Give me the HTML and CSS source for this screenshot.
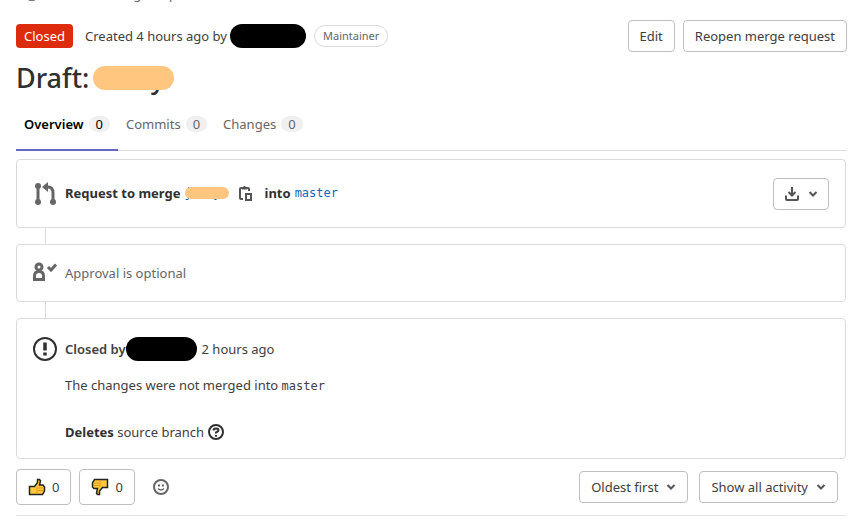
FILE: index.html
```
<!DOCTYPE html>
<html lang="en">
<head>
<meta charset="utf-8">
<title>Merge request</title>
<link rel="stylesheet" href="styles.css">
</head>
<body>
<nav class="crumbs" aria-label="Breadcrumb"><span>/_ /</span><span>Merge requests</span></nav>
<main>
  <header class="top">
    <span class="state">Closed</span>
    <span class="meta">Created 4 hours ago by</span>
    <span class="redact author"></span>
    <span class="role">Maintainer</span>
    <div class="actions">
      <button class="btn" type="button">Edit</button>
      <button class="btn" type="button">Reopen merge request</button>
    </div>
  </header>
  <h1 class="title">Draft: <span class="cover cover-title"><span>y.</span></span></h1>
  <nav class="tabs" aria-label="Sections">
    <a class="tab active" href="#overview">Overview <span class="count">0</span></a>
    <a class="tab" href="#commits">Commits <span class="count">0</span></a>
    <a class="tab" href="#changes">Changes <span class="count">0</span></a>
  </nav>

  <section class="card merge">
    <svg class="icon" viewBox="0 0 24 24" width="24" height="24" fill="none" stroke="#666" stroke-width="3"><circle cx="5" cy="4" r="3" fill="#666" stroke="none"/><circle cx="5" cy="20" r="3" fill="#666" stroke="none"/><circle cx="20" cy="20" r="3" fill="#666" stroke="none"/><path d="M5 4v16M20 20V11q0-6-5-6h-1"/><path d="M15 0v10L9 5z" fill="#666" stroke="none"/></svg>
    <div class="request">
      <b>Request to merge</b>
      <a class="cover cover-branch mono" href="#source"><span>j</span><span>y</span></a>
      <button class="copy" type="button" aria-label="Copy branch name"><svg viewBox="0 0 16 16" width="16" height="16" fill="none" stroke="#555" stroke-width="2"><path d="M6 14H4q-1 0-1-1V4q0-1 1-1h7q1 0 1 1v2"/><path d="M5 4.500V3l2-2h1l2 2v1.500z" fill="#555" stroke="none"/><path d="M9 9h5v6H9z"/></svg></button>
      <b>into</b>
      <a class="mono" href="#master">master</a>
    </div>
    <button class="btn download" type="button" aria-label="Download"><svg viewBox="0 0 16 16" width="16" height="16" fill="none" stroke="#555" stroke-width="2"><path d="M2 9.500V13q0 1 1 1h10q1 0 1-1V9.500M8 1v8M4.500 6L8 9.500 11.500 6"/></svg><svg class="chev" viewBox="0 0 10 8" width="10" height="8"><path d="M1.500 2L5 5.500 8.500 2"/></svg></button>
  </section>
  <section class="card approval">
    <svg class="icon" viewBox="0 0 24 24" width="24" height="24" fill="none" stroke="#666" stroke-width="3"><circle cx="6" cy="6" r="3"/><path d="M1.500 18.500v-3.500q0-4.500 4.500-4.500t4.500 4.500v3.500z"/><path d="M15 6l3 3 5-5.500"/></svg>
    <span class="muted">Approval is optional</span>
  </section>
  <section class="card closed">
    <svg class="icon" viewBox="0 0 24 24" width="24" height="24" fill="none" stroke="#303030"><circle cx="12" cy="12" r="11" stroke-width="2"/><path d="M12 5.500v8M12 15.500v3" stroke-width="3.500"/></svg>
    <div>
      <p class="line"><span class="semi">Closed by</span><span class="redact closer"></span><span>2 hours ago</span></p>
      <p class="note">The changes were not merged into <code class="mono">master</code></p>
      <p class="line"><span><b>Deletes</b> source branch</span><svg class="help" viewBox="0 0 16 16" width="16" height="16" fill="none" stroke="#303030" stroke-width="2"><circle cx="8" cy="8" r="7"/><path d="M5.500 6.500q0-2 2.500-2t2.500 1.800q0 1.200-2.500 2.200v1M8 11v1.800"/></svg></p>
    </div>
  </section>

  <footer class="bottom">
    <button class="btn award" type="button" aria-label="Thumbs up"><svg viewBox="0 0 18 18" width="18" height="18"><path class="thumb" d="M1.500 8.500h5l3-4v-3h2l1 1.500-1 4h3.500l1.500 2v4l-2 3.500h-13z"/><path class="fold" d="M9 9v7M10 10h5M10 12.500h5"/></svg><span>0</span></button>
    <button class="btn award" type="button" aria-label="Thumbs down"><svg viewBox="0 0 18 18" width="18" height="18"><path class="thumb" d="M16.500 1.500v8h-5l-3 3.500v3.500h-2l-1-1.500 1-4.500H3L1.500 9V5l2-3.500z"/><path class="fold" d="M9 2v7M3 5h5M3 7.500h5"/></svg><span>0</span></button>
    <button class="react" type="button" aria-label="Add reaction"><svg viewBox="0 0 16 16" width="16" height="16" fill="none" stroke="#666"><circle cx="8" cy="8" r="7" stroke-width="2"/><path d="M5 9.500q3 3 6 0" stroke-width="1.500"/><path d="M5 5.500h2v2H5zM9 5.500h2v2H9z" fill="#666" stroke="none"/></svg></button>
    <div class="filters">
      <button class="btn" type="button">Oldest first<svg class="chev" viewBox="0 0 10 8" width="10" height="8"><path d="M1.500 2L5 5.500 8.500 2"/></svg></button>
      <button class="btn" type="button">Show all activity<svg class="chev" viewBox="0 0 10 8" width="10" height="8"><path d="M1.500 2L5 5.500 8.500 2"/></svg></button>
    </div>
  </footer>
</main>
</body>
</html>
```
FILE: styles.css
```
* { box-sizing: border-box; }
body { margin: 0; background: #fff; color: #404040; font: 13px/20px "Noto Sans", sans-serif; }
main { padding: 0 12px 0 16px; }
p { margin: 0; }
a { color: #1068bf; text-decoration: none; }
button { font: inherit; color: inherit; background: none; border: 0; padding: 0; }
svg { flex: none; overflow: visible; }
b { font-weight: 700; color: #303030; }
.mono { font-family: "DejaVu Sans Mono", monospace; font-size: 12px; }

.crumbs { display: flex; gap: 66px; height: 36px; margin-top: -16px; padding-left: 24px; color: #666; }

.top { display: flex; align-items: center; }
.state { background: #dd2b0e; color: #fff; border-radius: 4px; padding: 2px 8px; }
.meta { margin-left: 12px; }
.redact { background: #000; border-radius: 12px; height: 24px; }
.author { width: 76px; margin-left: 3px; }
.role { margin-left: 8px; border: 1px solid #dbdbdb; border-radius: 12px; padding: 0 8px; font-size: 11px; color: #666; }
.actions, .filters { margin-left: auto; display: flex; gap: 8px; }
.btn { height: 32px; border: 1px solid #bfbfbf; border-radius: 4px; padding: 0 11px; display: flex; align-items: center; gap: 8px; background: #fff; white-space: nowrap; }
.chev { fill: none; stroke: #555; stroke-width: 2; }

.title { display: flex; gap: 4px; margin: 6px 0 2px; font-size: 27px; line-height: 40px; font-weight: 500; color: #303030; }
.cover { position: relative; display: flex; justify-content: flex-end; }
.cover::after { content: ""; position: absolute; left: 0; right: 0; background: #ffc680; border-radius: 12px; }
.cover-title { width: 81px; padding-right: 3px; }
.cover-title::after { top: 8px; height: 24px; }
.cover-branch { width: 44px; margin: 0 8px 0 4px; padding-right: 8px; justify-content: space-between; }
.cover-branch::after { top: 4px; height: 12px; }

.tabs { display: flex; border-bottom: 1px solid #dbdbdb; }
.tab { display: flex; gap: 5px; padding: 14px 8px 16px; color: #666; }
.tab.active { padding-bottom: 15px; margin-bottom: -1px; color: #000; font-weight: 600; border-bottom: 2px solid #6666c4; }
.count { height: 16px; margin-top: 2px; background: #f0f0f0; border-radius: 8px; padding: 0 7px; line-height: 16px; }
.active .count { font-weight: 400; }

.card { position: relative; display: flex; align-items: center; gap: 8px; margin: 0 1px 16px 0; border: 1px solid #dbdbdb; border-radius: 4px; padding: 16px; }
.card + .card::before { content: ""; position: absolute; left: 28px; top: -17px; height: 16px; border-left: 1px solid #dbdbdb; }
.merge { margin-top: 8px; padding: 18px 16px 17px; }
.request { display: flex; align-items: center; padding-bottom: 3px; }
.copy { display: flex; margin-right: 12px; }
.request b + .mono { margin-left: 4px; }
.download { margin-left: auto; }
.btn.download { padding: 0 10px; }
.approval { height: 58px; }
.muted { color: #666; }
.closed { align-items: flex-start; padding: 18px 16px 14px; margin-bottom: 10px; }
.line { display: flex; align-items: center; height: 24px; }
.semi { font-weight: 600; }
.closer { width: 71px; margin-right: 5px; }
.note { margin: 14px 0 24px; }
.help { margin-left: 4px; }

.bottom { display: flex; align-items: center; padding: 0 8px 10px 0; margin-right: 1px; border-bottom: 1px solid #e5e5e5; }
.award { height: 36px; padding: 0 11px; gap: 6px; margin-right: 8px; }
.react { display: flex; margin-left: 10px; }
.thumb { fill: #ffc83d; stroke: #222; stroke-width: 1.5; }
.fold { fill: none; stroke: #e59a17; }
.filters { gap: 11px; }
```
